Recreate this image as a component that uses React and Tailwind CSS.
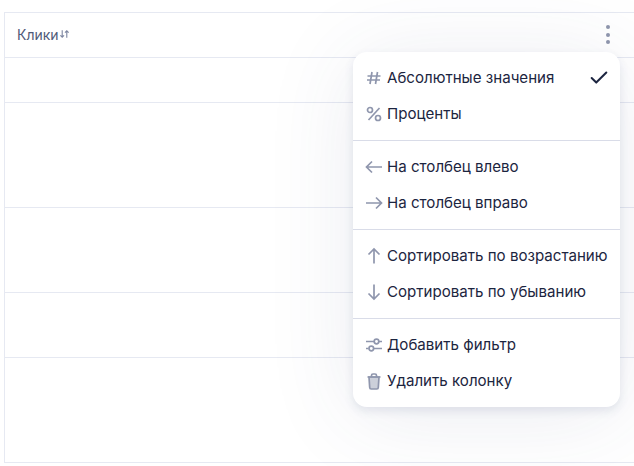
import { Check } from 'lucide-react'

const ROW_HEIGHTS = ['h-[45px]', 'h-[45px]', 'h-[105px]', 'h-[85px]', 'h-[65px]', 'h-[105px]']

const icons = {
  hash: <path d="M7 3 5 15M12.500 3l-2 12M2.500 7h13M2 11h13" />,
  percent: (
    <>
      <path d="M14.500 3 3.500 15" />
      <circle cx="5" cy="5" r="2.500" />
      <circle cx="13" cy="13" r="2.500" />
    </>
  ),
  left: <path d="M17 9H1.500M7 3.500 1.500 9 7 14.500" />,
  right: <path d="M1 9h15.500M11 3.500 16.500 9 11 14.500" />,
  up: <path d="M9 16.500V2M3.500 7.500 9 2l5.500 5.500" />,
  down: <path d="M9 1.500V16M3.500 10.500 9 16l5.500-5.500" />,
  filter: (
    <>
      <path d="M1 5.500h8M14 5.500h3M1 12.500h2.500M9 12.500h8" />
      <circle cx="11.500" cy="5.500" r="2.300" />
      <circle cx="6.300" cy="12.500" r="2.300" />
    </>
  ),
  trash: (
    <>
      <path d="M2.500 5h13M6.500 5V3.500a1.500 1.500 0 0 1 1.500-1.500h2a1.500 1.500 0 0 1 1.500 1.500V5" />
      <path d="M4 5h10l-.7 10.500a1.500 1.500 0 0 1-1.500 1.500H6.200a1.500 1.500 0 0 1-1.500-1.500L4 5Z" fill="#8f96ad" fillOpacity="0.45" />
    </>
  ),
}

const GROUPS = [
  [
    { icon: 'hash', label: 'Абсолютные значения', checked: true },
    { icon: 'percent', label: 'Проценты' },
  ],
  [
    { icon: 'left', label: 'На столбец влево' },
    { icon: 'right', label: 'На столбец вправо' },
  ],
  [
    { icon: 'up', label: 'Сортировать по возрастанию' },
    { icon: 'down', label: 'Сортировать по убыванию' },
  ],
  [
    { icon: 'filter', label: 'Добавить фильтр' },
    { icon: 'trash', label: 'Удалить колонку' },
  ],
]

function MenuItem({ icon, label, checked }) {
  return (
    <div className="relative flex h-9 items-center gap-[4px] pl-[12px]">
      <svg
        viewBox="0 0 18 18"
        className="h-[18px] w-[18px] shrink-0 text-[#8f96ad]"
        fill="none"
        stroke="currentColor"
        strokeWidth="1.700"
      >
        {icons[icon]}
      </svg>
      <span className="whitespace-nowrap">{label}</span>
      {checked && (
        <Check className="absolute right-[10px] top-[7px] h-[22px] w-[22px] text-[#1c2540]" strokeWidth={2.200} />
      )}
    </div>
  )
}

export default function App() {
  return (
    <div className="relative h-[466px] w-[634px] overflow-hidden bg-white font-['Inter',sans-serif]">
      <div className="pt-3 pl-1">
        <div className="border-l border-[#e6e9f2]">
          {ROW_HEIGHTS.map((h, i) => (
            <div key={i} className={`${h} border-t border-[#e6e9f2]`}>
              {i === 0 && (
                <div className="flex h-full items-center pb-[2px] pl-3 text-[14px] text-[#4f5a78]">
                  Клики
                  <svg viewBox="0 0 12 10" className="h-[10px] w-[11px] text-[#7d86a1]" fill="none" stroke="currentColor" strokeWidth="1.200">
                    <path d="M3.500 1v7.500M1.500 6.500l2 2 2-2M8.500 9V1.500M6.500 3.500l2-2 2 2" />
                  </svg>
                </div>
              )}
            </div>
          ))}
          <div className="border-t border-[#e6e9f2]" />
        </div>
      </div>

      <div className="absolute top-[25px] left-[606px] flex flex-col gap-[3.500px]">
        <span className="h-[4px] w-[4px] rounded-full bg-[#8f96ad]" />
        <span className="h-[4px] w-[4px] rounded-full bg-[#8f96ad]" />
        <span className="h-[4px] w-[4px] rounded-full bg-[#8f96ad]" />
      </div>

      <div className="absolute top-[52px] left-[353px] w-[267px] rounded-[14px] bg-white text-[15.100px] text-[#1c2540] shadow-[0_4px_10px_rgba(60,70,120,0.12),0_8px_90px_rgba(60,70,120,0.10)]">
        {GROUPS.map((items, i) => (
          <div
            key={i}
            className={i === 0 ? 'pt-[8px] pb-[8px]' : 'border-t border-[#d9dce8] pt-[8px] pb-[8px]'}
          >
            {items.map((item) => (
              <MenuItem key={item.label} {...item} />
            ))}
          </div>
        ))}
      </div>
    </div>
  )
}
